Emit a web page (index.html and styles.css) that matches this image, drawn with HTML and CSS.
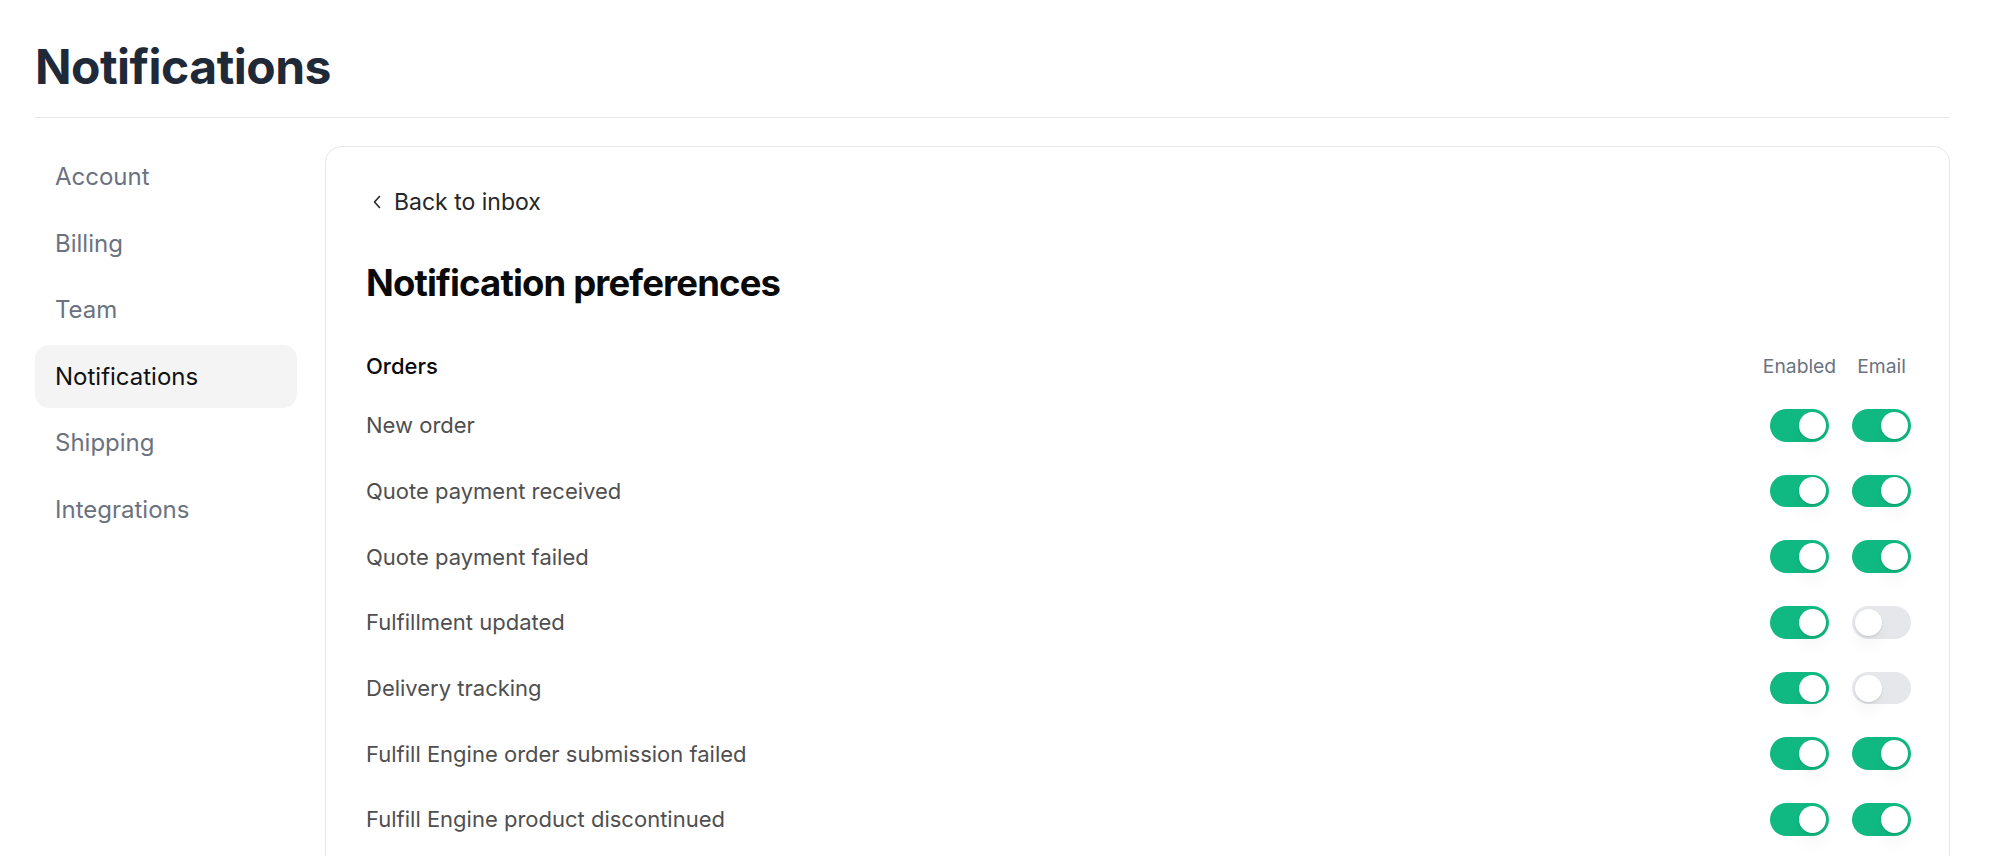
FILE: index.html
```html
<!DOCTYPE html>
<html lang="en">
<head>
<meta charset="utf-8">
<title>Notifications</title>
<link rel="stylesheet" href="styles.css">
</head>
<body>
<div class="page">
  <header class="page-header">
    <h1 class="page-title">Notifications</h1>
  </header>
  <div class="layout">
    <nav class="sidebar">
      <a class="nav-item">Account</a>
      <a class="nav-item">Billing</a>
      <a class="nav-item">Team</a>
      <a class="nav-item active">Notifications</a>
      <a class="nav-item">Shipping</a>
      <a class="nav-item">Integrations</a>
    </nav>
    <main class="card">
      <a class="back-link">
        <svg class="chevron" width="10" height="14" viewBox="0 0 10 14" aria-hidden="true">
          <polyline points="7.5,1.5 2.5,7 7.5,12.5" fill="none" stroke="#262626" stroke-width="1.6" stroke-linecap="round" stroke-linejoin="round"/>
        </svg>
        <span>Back to inbox</span>
      </a>
      <h2 class="card-title">Notification preferences</h2>
      <section class="section">
        <div class="section-head">
          <span class="section-title">Orders</span>
          <div class="cols">
            <span class="col-label">Enabled</span>
            <span class="col-label">Email</span>
          </div>
        </div>
        <div class="rows">
          <div class="row">
            <span class="row-label">New order</span>
            <div class="cols"><span class="toggle on"></span><span class="toggle on"></span></div>
          </div>
          <div class="row">
            <span class="row-label">Quote payment received</span>
            <div class="cols"><span class="toggle on"></span><span class="toggle on"></span></div>
          </div>
          <div class="row">
            <span class="row-label">Quote payment failed</span>
            <div class="cols"><span class="toggle on"></span><span class="toggle on"></span></div>
          </div>
          <div class="row">
            <span class="row-label">Fulfillment updated</span>
            <div class="cols"><span class="toggle on"></span><span class="toggle"></span></div>
          </div>
          <div class="row">
            <span class="row-label">Delivery tracking</span>
            <div class="cols"><span class="toggle on"></span><span class="toggle"></span></div>
          </div>
          <div class="row">
            <span class="row-label">Fulfill Engine order submission failed</span>
            <div class="cols"><span class="toggle on"></span><span class="toggle on"></span></div>
          </div>
          <div class="row">
            <span class="row-label">Fulfill Engine product discontinued</span>
            <div class="cols"><span class="toggle on"></span><span class="toggle on"></span></div>
          </div>
        </div>
      </section>
    </main>
  </div>
</div>
</body>
</html>
```

FILE: styles.css
```css
* {
  box-sizing: border-box;
}

html, body {
  margin: 0;
  padding: 0;
  background: #ffffff;
}

body {
  font-family: "Inter", "Noto Sans", "Liberation Sans", sans-serif;
  color: #111827;
  -webkit-font-smoothing: antialiased;
}

.page {
  padding: 43px 50px 0 35px;
}

.page-header {
  padding-bottom: 26px;
  border-bottom: 1px solid #e5e7eb;
}

.page-title {
  margin: 0;
  font-size: 48px;
  line-height: 48px;
  font-weight: 700;
  letter-spacing: -0.5px;
  color: #1f2937;
}

.layout {
  display: grid;
  grid-template-columns: 262px 1fr;
  gap: 28px;
  margin-top: 28px;
}

.sidebar {
  display: flex;
  flex-direction: column;
  gap: 3.5px;
  margin-top: -1px;
}

.nav-item {
  display: flex;
  align-items: center;
  height: 63px;
  padding: 0 20px;
  border-radius: 14px;
  font-size: 24px;
  color: #6b7280;
  text-decoration: none;
}

.nav-item.active {
  background: #f4f4f5;
  color: #111111;
}

.card {
  border: 1px solid #e5e7eb;
  border-radius: 16px;
  padding: 41px 38px 60px 40px;
  min-height: 760px;
}

.back-link {
  display: flex;
  align-items: center;
  gap: 12px;
  height: 28px;
  padding-left: 6px;
  font-size: 23px;
  color: #262626;
  text-decoration: none;
}

.chevron {
  flex: none;
}

.card-title {
  margin: 45px 0 0;
  font-size: 36.5px;
  line-height: 44.8px;
  font-weight: 700;
  letter-spacing: -0.85px;
  color: #0a0a0a;
}

.section {
  margin-top: 44px;
}

.section-head {
  display: flex;
  align-items: center;
  justify-content: space-between;
  height: 32px;
}

.section-title {
  font-size: 22px;
  font-weight: 500;
  color: #0a0a0a;
}

.cols {
  display: grid;
  grid-template-columns: 59px 59px;
  column-gap: 23px;
  justify-items: center;
}

.col-label {
  font-size: 19.3px;
  color: #6b7280;
  white-space: nowrap;
}

.rows {
  display: flex;
  flex-direction: column;
  gap: 33.7px;
  margin-top: 27.5px;
}

.row {
  display: flex;
  align-items: center;
  justify-content: space-between;
  height: 32px;
}

.row-label {
  font-size: 22px;
  color: #4f4f4f;
}

.toggle {
  position: relative;
  display: block;
  width: 59px;
  height: 32.5px;
  border-radius: 999px;
  background: #e5e7eb;
}

.toggle.on {
  background: #10b981;
}

.toggle::after {
  content: "";
  position: absolute;
  top: 2.75px;
  left: 2.75px;
  width: 27px;
  height: 27px;
  border-radius: 50%;
  background: #ffffff;
  box-shadow: 0 1px 2px rgba(0, 0, 0, 0.12), 0 12px 18px -4px rgba(0, 0, 0, 0.07);
}

.toggle.on::after {
  left: 29.25px;
}
```
